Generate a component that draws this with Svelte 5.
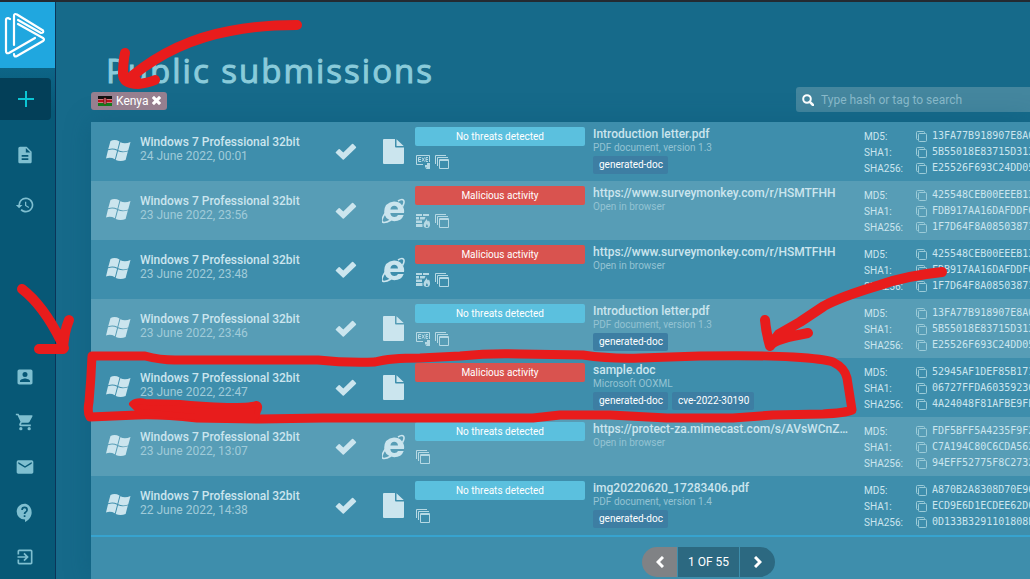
<script>
  const introHashes = ['13FA77B918907E8A0', '5B55018E83715D313', 'E25526F693C24DD05'];
  const surveyHashes = ['425548CEB00EEEB13', 'FDB917AA16DAFDDF0', '1F7D64F8A08503871'];
  const hashNames = ['MD5:', 'SHA1:', 'SHA256:'];

  const rows = [
    { date: '24 June 2022, 00:01', kind: 'file', bad: false, marks: ['exe', 'stack'], name: 'Introduction letter.pdf', type: 'PDF document, version 1.3', tags: ['generated-doc'], hashes: introHashes },
    { date: '23 June 2022, 23:56', kind: 'ie', bad: true, marks: ['fire', 'stack'], name: 'https://www.surveymonkey.com/r/HSMTFHH', type: 'Open in browser', tags: [], hashes: surveyHashes },
    { date: '23 June 2022, 23:48', kind: 'ie', bad: true, marks: ['fire', 'stack'], name: 'https://www.surveymonkey.com/r/HSMTFHH', type: 'Open in browser', tags: [], hashes: surveyHashes },
    { date: '23 June 2022, 23:46', kind: 'file', bad: false, marks: ['exe', 'stack'], name: 'Introduction letter.pdf', type: 'PDF document, version 1.3', tags: ['generated-doc'], hashes: introHashes },
    { date: '23 June 2022, 22:47', kind: 'file', bad: true, marks: [], name: 'sample.doc', type: 'Microsoft OOXML', tags: ['generated-doc', 'cve-2022-30190'], hashes: ['52945AF1DEF85B171', '06727FFDA60359236', '4A24048F81AFBE9FE'] },
    { date: '23 June 2022, 13:07', kind: 'ie', bad: false, marks: ['stack'], name: 'https://protect-za.mimecast.com/s/AVsWCnZ…', type: 'Open in browser', tags: [], hashes: ['FDF5BFF5A4235F9F2', 'C7A194C80C6CDA562', '94EFF52775F8C2732'] },
    { date: '22 June 2022, 14:38', kind: 'file', bad: false, marks: ['stack'], name: 'img20220620_17283406.pdf', type: 'PDF document, version 1.4', tags: ['generated-doc'], hashes: ['A870B2A8308D70E96', 'ECD9E6D1ECDEE62D6', '0D133B3291101808E'] }
  ];

  const topLinks = [
    { label: 'Reports', d: 'M14 2H6c-1.1 0-2 .9-2 2v16c0 1.1.9 2 2 2h12c1.1 0 2-.9 2-2V8l-6-6zm2 16H8v-2h8v2zm0-4H8v-2h8v2zm-3-5V3.500L18.500 9H13z' },
    { label: 'History', d: 'M13 3a9 9 0 0 0-9 9H1l3.900 3.900L9 12H6a7 7 0 1 1 2.060 4.940l-1.420 1.420A9 9 0 1 0 13 3zm-1 5v5l4.280 2.540.72-1.210-3.500-2.080V8H12z' }
  ];
  const bottomLinks = [
    { label: 'Profile', d: 'M3 5v14c0 1.100.89 2 2 2h14c1.100 0 2-.9 2-2V5c0-1.100-.9-2-2-2H5a2 2 0 0 0-2 2zm12 4a3 3 0 1 1-6 0 3 3 0 0 1 6 0zm-9 8c0-2 4-3.100 6-3.100s6 1.100 6 3.100v1H6v-1z' },
    { label: 'Pricing', d: 'M7 18a2 2 0 1 0 0 4 2 2 0 0 0 0-4zM1 2v2h2l3.600 7.590-1.350 2.450C4.520 15.370 5.480 17 7 17h12v-2H7.420a.25.25 0 0 1-.22-.37L8.100 13h7.450c.75 0 1.410-.41 1.750-1.030l3.580-6.490A1 1 0 0 0 20 4H5.210l-.94-2H1zm16 16a2 2 0 1 0 0 4 2 2 0 0 0 0-4z' },
    { label: 'Contacts', d: 'M20 4H4a2 2 0 0 0-2 2v12c0 1.100.9 2 2 2h16c1.100 0 2-.9 2-2V6c0-1.100-.9-2-2-2zm0 4l-8 5-8-5V6l8 5 8-5v2z' },
    { label: 'Help', d: 'M11.500 2a9.500 9.500 0 1 0 0 19h.5v3c4.860-2.340 8-7 8-11.500C20 6.810 16.190 2 11.500 2zm1 16h-2v-2h2v2zm0-3.500h-2c0-3.250 3-3 3-5a2 2 0 0 0-4 0h-2a4 4 0 0 1 8 0c0 2.500-3 2.750-3 5z' },
    { label: 'Sign in', d: 'M10.090 15.590L11.500 17l5-5-5-5-1.410 1.410L12.670 11H3v2h9.670l-2.580 2.590zM19 3H5a2 2 0 0 0-2 2v4h2V5h14v14H5v-4H3v4a2 2 0 0 0 2 2h14c1.100 0 2-.9 2-2V5c0-1.100-.9-2-2-2z' }
  ];
</script>

<div class="page">
  <nav class="side" aria-label="Main">
    <a class="logo" href="#home" aria-label="Home">
      <svg viewBox="0 0 56 66" width="56" height="66" fill="none" stroke="#fff" stroke-width="2.200" stroke-linejoin="round" stroke-linecap="round">
        <path d="M10 17L8 16Q6 16 6 18V49Q6 52 9 51L35 36" />
        <path d="M14 43V14Q14 11 17 12.500L43 28.500Q44 31 41 31L18 18" />
        <path d="M18 22L43 36Q45 37.500 43 39L17 54Q14 55.500 14 52" />
      </svg>
    </a>
    <a class="new" href="#new" aria-label="New task">
      <svg viewBox="0 0 16 16" width="16" height="16" stroke="#0bc5d4" stroke-width="2"><path d="M8 0v16M0 8h16" /></svg>
    </a>
    <div class="links">
      {#each topLinks as l}
        <a href="#nav" aria-label={l.label}><svg viewBox="0 0 24 24" width="20" height="20" fill="currentColor"><path d={l.d} /></svg></a>
      {/each}
    </div>
    <div class="links bottom">
      {#each bottomLinks as l}
        <a href="#nav" aria-label={l.label}><svg viewBox="0 0 24 24" width="20" height="20" fill="currentColor"><path d={l.d} /></svg></a>
      {/each}
    </div>
  </nav>

  <main>
    <h1>Public submissions</h1>
    <div class="tools">
      <button class="filter">
        <svg viewBox="0 0 14 10" width="14" height="10">
          <path fill="#111" d="M0 0h14v3H0z" /><path fill="#e8d8d8" d="M0 3h14v4H0z" /><path fill="#b8121e" d="M0 3.500h14v3H0z" /><path fill="#127a1c" d="M0 7h14v3H0z" />
          <ellipse cx="7" cy="5" rx="1.800" ry="3.500" fill="#8d0f18" /><path d="M7 2v6" stroke="#eee" stroke-width=".6" />
        </svg>
        <span>Kenya</span>
        <svg viewBox="0 0 10 10" width="9" height="9" stroke="#fff" stroke-width="3.400"><path d="M1 1l8 8M9 1L1 9" /></svg>
      </button>
      <label class="search">
        <svg viewBox="0 0 12 12" width="12" height="12" fill="none" stroke="#fff" stroke-width="2"><circle cx="5" cy="5" r="3.800" /><path d="M7.800 7.800L11 11" stroke-width="2.500" stroke-linecap="round" /></svg>
        <input type="text" placeholder="Type hash or tag to search" aria-label="Search" />
      </label>
    </div>

    <section class="panel">
      <table>
        <colgroup>
          <col class="c-os" /><col class="c-date" /><col class="c-check" /><col class="c-kind" /><col class="c-verdict" /><col class="c-name" /><col />
        </colgroup>
        <tbody>
          {#each rows as r}
            <tr>
              <td class="os">
                <svg viewBox="0 0 25 23" width="25" height="23" fill="currentColor">
                  <path d="M4.500 2Q9 0 13.500 2.500L11.400 10.800Q7 8.600 2.200 10.300Z" /><path d="M14.300 3.200Q19 5.300 24.500 3L22.200 11.400Q17 13.400 12.200 11.300Z" /><path d="M2 11.200Q6.800 9.400 11.100 11.700L8.900 20.300Q4.500 17.800 0 19.500Z" /><path d="M12 12.300Q16.800 14.400 21.900 12.300L19.600 20.900Q14.500 23 9.700 20.900Z" />
                </svg>
              </td>
              <td>
                <div class="strong">Windows 7 Professional 32bit</div>
                <div class="date">{r.date}</div>
              </td>
              <td class="check">
                <svg viewBox="0 0 22 17" width="22" height="17" fill="currentColor"><path d="M.9 8.900L3.600 6.200Q4.200 5.700 4.800 6.200L8.300 9.600L17 1Q17.600.4 18.200 1L20.900 3.700Q21.500 4.300 20.900 4.900L8.900 16.400Q8.300 17 7.700 16.400L.9 10.100Q.3 9.500.9 8.900Z" /></svg>
              </td>
              <td class="kind">
                {#if r.kind === 'file'}
                  <svg viewBox="0 0 24 26" width="24" height="26" fill="currentColor"><path d="M2 0h12v7.500q0 1 1 1h8V24q0 1-1 1H3q-1 0-1-1V1q0-1 1-1zM15.500 .3L22.700 7H16q-.5 0-.5-.5z" /></svg>
                {:else}
                  <svg viewBox="0 0 24 26" width="24" height="26" fill="none" stroke="currentColor">
                    <path fill="currentColor" stroke="none" fill-rule="evenodd" d="M13 3.500A10 9.800 0 0 1 23 15H9.300Q9.800 19 13.500 19Q16 19 17 17H22.700Q20.500 23.200 13.200 23.200Q3.200 22.500 3.200 13.500Q3.500 4.500 13 3.500ZM9.400 11.500H17Q16.500 7.800 13.200 7.800Q10 7.800 9.400 11.500Z" />
                    <path d="M17 3Q21 .6 22.500 2.200Q24 4 21.500 8.500M5 14Q-.5 22 1.500 24Q4 25.500 10 22" stroke-width="1.600" />
                  </svg>
                {/if}
              </td>
              <td>
                <div class="verdict" class:bad={r.bad}>{r.bad ? 'Malicious activity' : 'No threats detected'}</div>
                <div class="marks">
                  {#each r.marks as m}
                    {#if m === 'exe'}
                      <svg viewBox="0 0 14 14" width="14" height="14" fill="none" stroke="currentColor"><path d="M7 9.500H.5v-9h13V7M5 2.500H2.500v4H5M2.500 4.500H5M6 2.500l2.500 4M8.500 2.500L6 6.500M12 2.500H10v4h2M10 4.500h2" /><path d="M9 10h2V8h3v6H9.500l1.500-1.500H9z" fill="currentColor" stroke="none" /></svg>
                    {:else if m === 'fire'}
                      <svg viewBox="0 0 14 14" width="14" height="14" fill="currentColor"><path d="M0 0h6v2H0zM7 0h6v2H7zM0 3h3v2.500H0zM4 3h5.500L8.500 5.500H4zM0 6.500h6V9H0zM0 10h6.500v3H0z" /><path fill-rule="evenodd" d="M10.800 4Q10.500 6 12 7.500L13 6.500Q14.300 9 14 11.500Q13.500 14 11 14Q7.500 14 7.500 10.800Q7.800 8.500 9.300 7Q10.600 5.800 10.800 4ZM10.800 10Q9.800 11.500 10 13h1.800Q12.200 11.500 10.800 10Z" /></svg>
                    {:else}
                      <svg viewBox="0 0 14 14" width="14" height="14" fill="none" stroke="currentColor"><path d="M.5 9V.5H11M2.500 11V2.500H13M4.500 4.500h9v9h-9zM4.500 5.500h9" /></svg>
                    {/if}
                  {/each}
                </div>
              </td>
              <td>
                <div class="strong name">{r.name}</div>
                <div class="type">{r.type}</div>
                <div class="tags">{#each r.tags as t}<span>{t}</span>{/each}</div>
              </td>
              <td class="hashes">
                {#each r.hashes as h, i}
                  <div class="hash">
                    <span>{hashNames[i]}</span>
                    <button aria-label="Copy hash"><svg viewBox="0 0 11 11" width="11" height="11" fill="none" stroke="currentColor"><path d="M2.500 8.500h-1q-1 0-1-1v-6q0-1 1-1h6q1 0 1 1v1" /><rect x="2.500" y="2.500" width="8" height="8" rx="1" /></svg></button>
                    <code>{h}</code>
                  </div>
                {/each}
              </td>
            </tr>
          {/each}
        </tbody>
      </table>
      <div class="pager">
        <button class="prev" aria-label="Previous page"><svg viewBox="0 0 8 12" width="8" height="12" fill="none" stroke="#fff" stroke-width="3"><path d="M7 1L2 6l5 5" /></svg></button>
        <span>1 OF 55</span>
        <button class="next" aria-label="Next page"><svg viewBox="0 0 8 12" width="8" height="12" fill="none" stroke="#fff" stroke-width="3"><path d="M1 1l5 5-5 5" /></svg></button>
      </div>
    </section>
  </main>

  <svg class="ink" viewBox="0 0 1030 579" width="1030" height="579" fill="none" stroke="#e81c1c" stroke-linecap="round" stroke-linejoin="round" aria-hidden="true">
    <path stroke-width="10" d="M297 25Q260 25 230 31Q175 41 132 76M125 53Q123 62 123 75Q124 84 138 84Q148 83 155 80M130 78l6 2" />
    <path stroke-width="10" d="M22 289Q43 305 61 341L64 348M69 320Q64 332 63 349L39 349" />
    <path stroke-width="10" d="M942 272Q905 276 880 285Q840 297 824 306L800 322L779 334L770 346M765 320Q766 332 770 346Q774 339 808 333" />
    <path stroke-width="9" d="M92 356H145Q160 360 175 360H318Q345 363 375 362Q390 358 420 358L460 356Q490 353 520 354L583 355Q610 359 640 358L700 356Q760 355 793 357Q825 359 833 362Q845 368 847 378L852 410Q845 413 823 414L773 415L733 418H667L610 415H560L533 418H323L260 419L197 418Q160 414 137 415L90 417Q87 412 89 402Q91 380 92 356" />
    <path stroke-width="6" fill="#e81c1c" d="M132 404Q137 400 145 402L180 403Q200 405 227 406Q250 406 256 404Q261 405 258 411L256 417H195L140 412Z" />
  </svg>
</div>

<style>
  :global(body) { margin: 0; background: #146786; }
  .page { position: relative; display: flex; min-height: 100vh; overflow: hidden; box-sizing: border-box; border-top: 2px solid #242a31; background: #166a8a; font-family: Roboto, "Liberation Sans", sans-serif; color: #cbe5ee; }
  a { color: inherit; }
  button { border: 0; padding: 0; background: none; color: inherit; font: inherit; cursor: pointer; }
  svg { display: block; flex: none; }
  .side { flex: none; width: 55px; display: flex; flex-direction: column; background: linear-gradient(#0d6587 66px, #075876 110px); border-right: 1px solid #0b3558; }
  .logo { height: 66px; background: #20a7df; overflow: hidden; }
  .new { display: flex; align-items: center; justify-content: center; height: 42px; width: 51px; margin-top: 10px; background: #033f58; border-radius: 0 4px 4px 0; }
  .links { display: flex; flex-direction: column; align-items: center; gap: 30px; padding: 25px 5px 0 0; color: #7fbfd0; }
  .links.bottom { margin-top: auto; gap: 25px; padding-bottom: 12px; }
  main { flex: 1; min-width: 0; padding-left: 35px; display: flex; flex-direction: column; }
  h1 { margin: 46px 0 0 15px; font: 400 33px/46px "Open Sans", "Noto Sans", sans-serif; letter-spacing: 2px; color: #8acbda; -webkit-text-stroke: 1px #8acbda; }
  .tools { display: flex; justify-content: space-between; height: 28px; margin-top: -7px; }
  .filter { display: flex; align-items: center; align-self: center; gap: 4px; height: 18px; padding: 0 6px 0 7px; margin-bottom: 1px; border-radius: 3px; background: #967f8f; color: #fff; font-size: 12px; position: relative; }
  .search { display: flex; align-items: center; gap: 7px; width: 228px; height: 25px; padding-left: 6px; background: #44869e; border-radius: 3px 0 0 3px; }
  .search input { flex: 1; min-width: 0; border: 0; padding: 0; background: none; outline: 0; color: #fff; font: 12px Roboto, sans-serif; }
  .search input::placeholder { color: #8abaca; opacity: 1; }
  .panel { flex: 1; margin-top: 7px; background: #3e8eac; box-shadow: 0 0 24px #0b567566; }
  table { width: 100%; table-layout: fixed; border-collapse: separate; border-spacing: 0; border-bottom: 2px solid #37a3cf; }
  .c-os { width: 49px; } .c-date { width: 195px; } .c-check { width: 47px; } .c-kind { width: 33px; } .c-verdict { width: 178px; } .c-name { width: 271px; }
  tr:nth-child(even) { background: #579db6; }
  td { box-sizing: border-box; padding: 0; height: 59px; vertical-align: top; white-space: nowrap; overflow: hidden; }
  .os svg { margin: 17px 0 0 15px; }
  .check svg { margin-top: 21px; }
  .kind svg { margin-top: 17px; margin-left: -1px; }
  .strong { font-size: 12px; line-height: 14px; font-weight: 500; margin-top: 13px; }
  .strong.name { margin-top: 5px; }
  .date { font-size: 12px; line-height: 14px; color: #a0cbd9; }
  .type { font-size: 10px; line-height: 14px; color: #94c3d3; }
  .verdict { width: 170px; margin-top: 5px; height: 19px; line-height: 19px; border-radius: 2px; background: #5bc0de; color: #fff; font-size: 10px; text-align: center; }
  .verdict.bad { background: #d9534f; }
  .marks { display: flex; gap: 5px; margin: 9px 0 0 1px; color: #b6d9e4; }
  .tags { display: flex; gap: 4px; margin-top: 1px; }
  .tags span { padding: 0 5px 0 6px; font-size: 10px; line-height: 18px; border-radius: 2px; background: #3d7ea3; color: #fff; }
  .hashes { padding-top: 6px; }
  .hash { display: flex; align-items: center; height: 16px; font-size: 10px; }
  .hash span { width: 52px; flex: none; }
  .hash button { color: #9bcbd8; margin-right: 5px; }
  .hash code { font: 10px/16px "DejaVu Sans Mono", monospace; }
  .pager { display: flex; gap: 1px; padding: 10px 0 2px 551px; font-size: 12px; line-height: 30px; color: #fff; }
  .pager > * { display: flex; align-items: center; justify-content: center; height: 30px; background: #2c6981; }
  .pager span { width: 61px; }
  .pager .prev { width: 35px; border-radius: 15px 0 0 15px; background: #808285; }
  .pager .next { width: 35px; border-radius: 0 15px 15px 0; }
  .ink { position: absolute; left: 0; top: -2px; pointer-events: none; }
</style>
